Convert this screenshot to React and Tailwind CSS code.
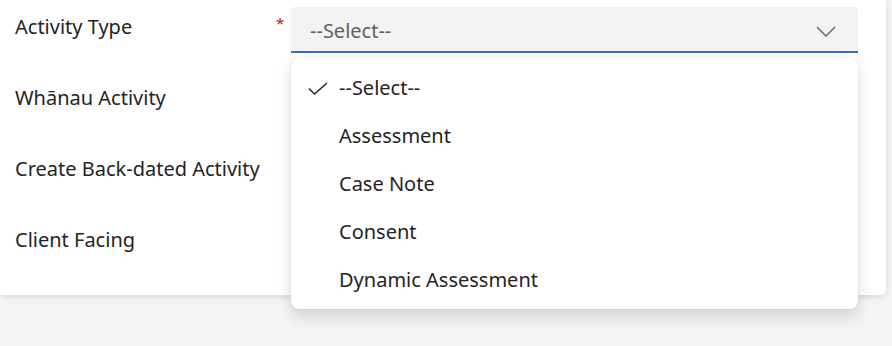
import { useState } from "react";

const options = [
  "--Select--",
  "Assessment",
  "Case Note",
  "Consent",
  "Dynamic Assessment",
];

const fields = [
  { label: "Activity Type", required: true },
  { label: "Whānau Activity" },
  { label: "Create Back-dated Activity" },
  { label: "Client Facing" },
];

const Chevron = () => (
  <svg width="20" height="11" viewBox="0 0 20 11" fill="none">
    <path d="M1 1l9 9 9-9" stroke="#616161" strokeWidth="1.4" />
  </svg>
);

const Check = () => (
  <svg width="20" height="13" viewBox="0 0 20 13" fill="none">
    <path d="M1 6.5l5.5 5.5L19 1" stroke="#242424" strokeWidth="1.5" />
  </svg>
);

const App = () => {
  const [selected] = useState("--Select--");

  return (
    <div
      className="relative w-[892px] h-[346px] overflow-hidden bg-[#f5f5f5] text-[#242424]"
      style={{ fontFamily: '"Noto Sans", "Open Sans", sans-serif' }}
    >
      <div className="w-[886px] h-[295px] bg-white rounded-br-md shadow-[0_2px_6px_rgba(0,0,0,0.12)]">
        {fields.map((f, i) => (
          <div key={f.label} className="flex h-[71px] pl-[15px]">
            <div className="w-[261px] mt-[13px] text-[20px] leading-[28px]">
              {f.label}
            </div>
            <div className="w-[15px] mt-[13px] text-[15px] leading-[20px] text-[#a4262c]">
              {f.required ? "*" : ""}
            </div>
            {i === 0 && (
              <div className="mt-[7px] w-[567px] h-[46px] flex items-center justify-between pt-[4px] pl-[19px] pr-[22px] bg-[#f3f3f3] rounded-t-[4px] border-b-2 border-[#3a6ccc]">
                <span className="text-[20px] text-[#616161]">{selected}</span>
                <Chevron />
              </div>
            )}
          </div>
        ))}
      </div>

      <div className="absolute left-[291px] top-[58px] w-[567px] h-[251px] bg-white rounded-lg shadow-[0_8px_16px_rgba(0,0,0,0.14),0_0_2px_rgba(0,0,0,0.12)] pt-[6px] pb-[5px]">
        {options.map((o) => (
          <div key={o} className="flex items-center h-[48px] text-[20px]">
            <div className="w-[48px] pl-[17px]">
              {o === selected && <Check />}
            </div>
            <span>{o}</span>
          </div>
        ))}
      </div>
    </div>
  );
};

export default App;
